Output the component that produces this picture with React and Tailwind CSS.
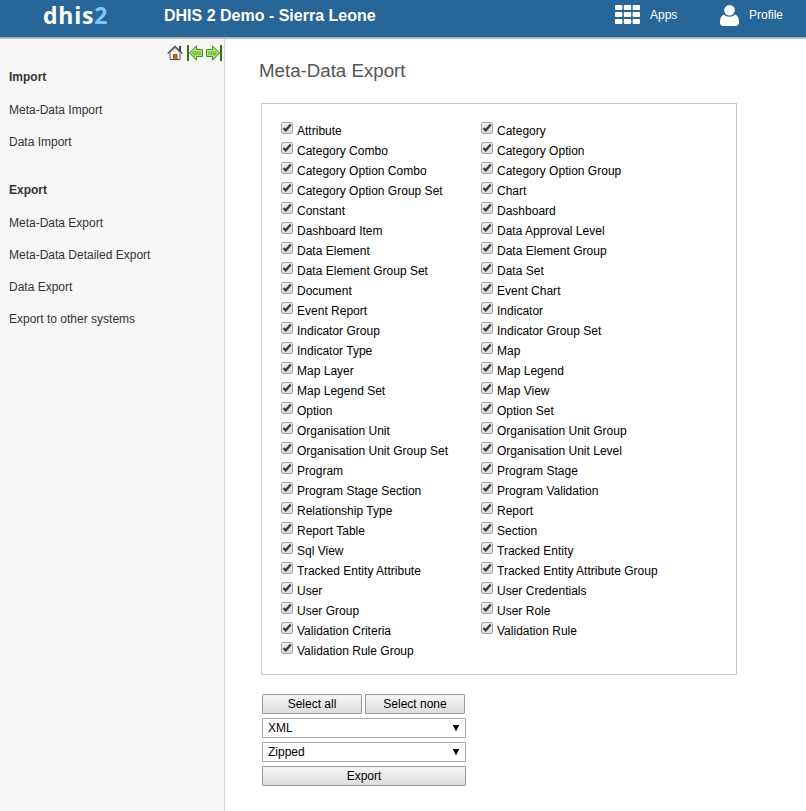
import React from "react";

const left = ["Attribute", "Category Combo", "Category Option Combo", "Category Option Group Set", "Constant", "Dashboard Item", "Data Element", "Data Element Group Set", "Document", "Event Report", "Indicator Group", "Indicator Type", "Map Layer", "Map Legend Set", "Option", "Organisation Unit", "Organisation Unit Group Set", "Program", "Program Stage Section", "Relationship Type", "Report Table", "Sql View", "Tracked Entity Attribute", "User", "User Group", "Validation Criteria", "Validation Rule Group"];
const right = ["Category", "Category Option", "Category Option Group", "Chart", "Dashboard", "Data Approval Level", "Data Element Group", "Data Set", "Event Chart", "Indicator", "Indicator Group Set", "Map", "Map Legend", "Map View", "Option Set", "Organisation Unit Group", "Organisation Unit Level", "Program Stage", "Program Validation", "Report", "Section", "Tracked Entity", "Tracked Entity Attribute Group", "User Credentials", "User Role", "Validation Rule"];

function Check({ label }) {
  return (
    <label className="flex h-5 items-start">
      <span className="mt-px h-3 w-3 shrink-0 rounded-[2px] border border-[#a6a6a6] bg-gradient-to-b from-[#eeeeee] to-[#dcdcdc]">
        <svg viewBox="0 0 10 10" className="block h-[10px] w-[10px]">
          <path d="M1.500 5.100 L3.800 7.300 L8.700 1.500" fill="none" stroke="#3c3c3c" strokeWidth="2.300" />
        </svg>
      </span>
      <span className="ml-1 whitespace-nowrap leading-5 tracking-[0.01px]">{label}</span>
    </label>
  );
}

function Home() {
  return (
    <svg viewBox="0 0 16 16" className="h-4 w-4">
      <path d="M12 1h2v5h-2z" fill="#444" />
      <path d="M3 8 8 3l5 5v6.500H3z" fill="#fafafa" stroke="#555" />
      <path d="M.7 8.500 8 1.500l7.300 7" fill="none" stroke="#444" strokeWidth="1.300" />
      <path d="M1.900 9 8 3l6.100 6" fill="none" stroke="#c4c4c4" strokeWidth=".8" />
      <path d="M6.500 9.500h3.500v5H6.500z" fill="#d06a10" stroke="#7a3a10" strokeWidth=".8" />
    </svg>
  );
}

function Arrow({ flip }) {
  return (
    <svg viewBox="0 0 16 16" className={flip ? "h-4 w-4 -scale-x-100" : "h-4 w-4"}>
      <defs>
        <linearGradient id="green" x1="0" y1="0" x2="0" y2="1">
          <stop offset="0" stopColor="#a5dd6c" />
          <stop offset="1" stopColor="#5fb62c" />
        </linearGradient>
      </defs>
      <path d="M0 0h2v16H0z" fill="#3a7504" />
      <path d="M2.500 8 9.500 .800V4.500h6v7h-6v3.700z" fill="url(#green)" stroke="#4a8c1c" />
      <path d="M4 8 8.600 3.200v2.300h5.900v5H8.600v2.300z" fill="none" stroke="#c8eba0" strokeWidth=".8" />
    </svg>
  );
}

function Btn({ children, className }) {
  return (
    <button className={"h-5 rounded-[1px] border border-[#9b9b9b] bg-gradient-to-b from-[#f6f6f6] to-[#dddddd] text-center leading-[18px] " + className}>
      {children}
    </button>
  );
}

function Select({ value }) {
  return (
    <div className="flex h-5 w-[204px] items-center justify-between rounded-[1px] border border-[#a6a6a6] bg-white pl-[5px] pr-[5px] leading-[18px]">
      <span>{value}</span>
      <svg viewBox="0 0 8 8" className="h-2 w-2">
        <path d="M.8 1h6.400L4 7.500z" fill="#000" />
      </svg>
    </div>
  );
}

const columns = [0, 8.8, 17.6];
const rows = [0, 7, 14];

export default function App() {
  return (
    <div className="flex h-[811px] w-[806px] flex-col overflow-hidden bg-white font-['Liberation_Sans',Arial,sans-serif] text-[12px] text-black">
      <header className="mb-px flex h-[38px] shrink-0 border-b border-[#a3a9ad] bg-[#276696] text-white shadow-[0_1px_1px_#c4c4c4]">
        <div className="ml-[43px] w-[121px] font-['Open_Sans',sans-serif] text-[23px] font-bold leading-[31px] tracking-[0.8px]">
          dhis<span className="text-[#7ac4fb]">2</span>
        </div>
        <div className="w-[451px] text-[16px] font-bold leading-[31px]">DHIS 2 Demo - Sierra Leone</div>
        <svg viewBox="0 0 25 19" className="mt-[5px] h-[19px] w-[25px]" fill="#fff">
          {columns.map((x) => rows.map((y) => <rect key={x + "-" + y} x={x} y={y} width="7.400" height="5" rx="1" />))}
        </svg>
        <div className="ml-[10px] w-[70px] leading-[30px]">Apps</div>
        <svg viewBox="0 0 20 21" className="mt-[5px] h-[21px] w-5" fill="#fff">
          <path d="M4 9.500C1 10.500 0 14 0 17.500 0 19.700 1.400 21 3.400 21h12.200c2 0 3.400-1.300 3.400-3.500 0-3.500-1-7-4-8-1.400 1.500-3.300 2.200-5.500 2.200S5.400 11 4 9.500z" />
          <circle cx="9.500" cy="5.300" r="5.300" />
        </svg>
        <div className="ml-[9px] leading-[30px]">Profile</div>
      </header>
      <div className="flex grow">
        <aside className="w-[225px] shrink-0 border-r border-[#d4d4d4] bg-[#f7f7f7] text-[#333]">
          <div className="flex h-[22px] items-start justify-end pr-[2px] pt-[6px]">
            <Home />
            <div className="ml-1 flex gap-[3px]">
              <Arrow />
              <Arrow flip />
            </div>
          </div>
          <nav className="flex flex-col pl-[9px] pt-2 leading-4">
            <h2 className="mb-[17px] font-bold">Import</h2>
            <a className="mb-4">Meta-Data Import</a>
            <a className="mb-8">Data Import</a>
            <h2 className="mb-[17px] font-bold">Export</h2>
            <a className="mb-4">Meta-Data Export</a>
            <a className="mb-4">Meta-Data Detailed Export</a>
            <a className="mb-4">Data Export</a>
            <a>Export to other systems</a>
          </nav>
        </aside>
        <main className="pl-[34px] pt-5">
          <h1 className="text-[18.700px] leading-6 text-[#555]">Meta-Data Export</h1>
          <div className="ml-[2px] mt-5 flex h-[572px] w-[476px] border border-[#c8c8c8] pl-[19px] pt-[17px]">
            <div className="w-[200px]">{left.map((t) => <Check key={t} label={t} />)}</div>
            <div>{right.map((t) => <Check key={t} label={t} />)}</div>
          </div>
          <div className="ml-[3px] mt-[19px] flex flex-col gap-1">
            <div className="flex gap-[3px]">
              <Btn className="w-[100px]">Select all</Btn>
              <Btn className="w-[100px]">Select none</Btn>
            </div>
            <Select value="XML" />
            <Select value="Zipped" />
            <Btn className="w-[204px]">Export</Btn>
          </div>
        </main>
      </div>
    </div>
  );
}
